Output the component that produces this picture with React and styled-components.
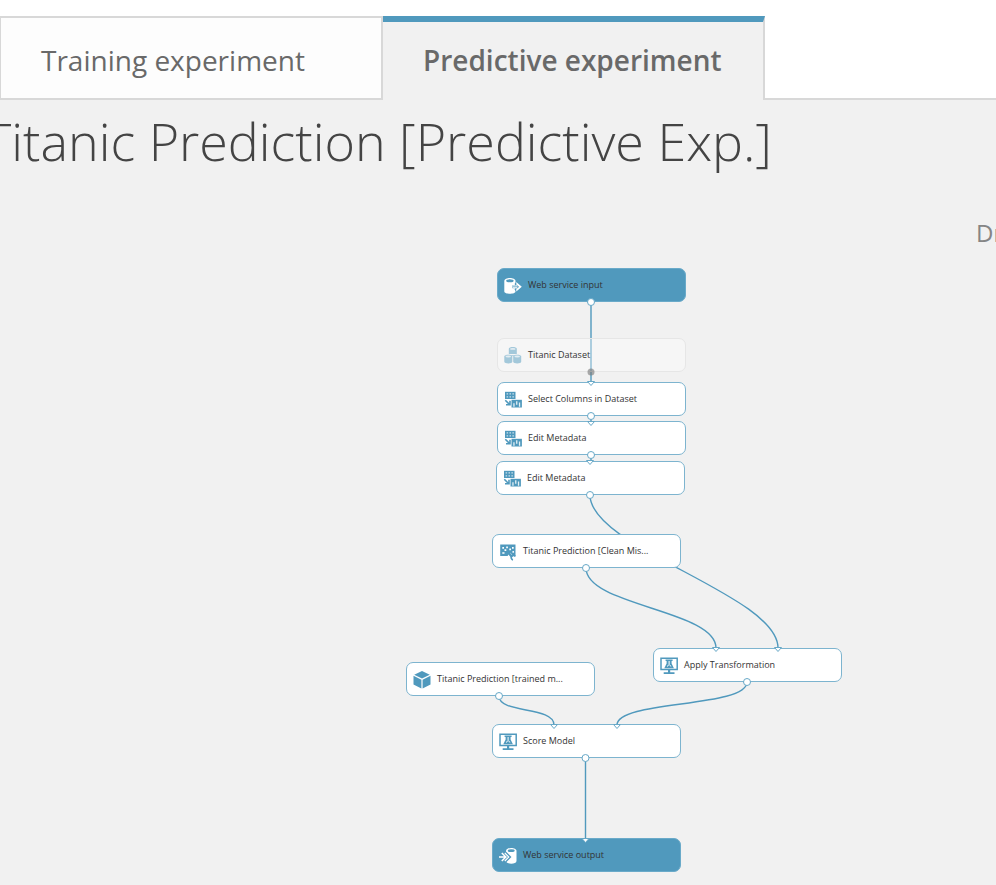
import React from "react";
import styled, { createGlobalStyle, css } from "styled-components";

const BLUE = "#5099bd";
const LINE = "#d8d8d8";
const CANVAS = "#f1f1f1";

const GlobalStyle = createGlobalStyle`
  *, *::before, *::after { box-sizing: border-box; }
  html, body, #root { min-height: 100vh; }
  body {
    margin: 0;
    background: ${CANVAS};
    font-family: "Open Sans", "Noto Sans", sans-serif;
    overflow: hidden;
  }
`;

const Page = styled.main`
  display: flex;
  flex-direction: column;
  min-height: 100vh;
`;

const TabBar = styled.div`
  display: flex;
  height: 100px;
  padding-top: 16px;
  background: #ffffff;
`;

const Tab = styled.button`
  flex: 0 0 382px;
  padding: 3px 40px 0;
  border: 2px solid ${LINE};
  background: #fdfdfd;
  color: #696969;
  font: 400 28px/36px "Open Sans", "Noto Sans", sans-serif;
  text-align: left;
  white-space: nowrap;
  cursor: pointer;

  &:first-child {
    flex-basis: 383px;
    border-left-width: 1px;
  }

  ${({ $active }) =>
    $active &&
    css`
      padding: 0 40px 3px;
      border-width: 6px 2px 0 0;
      border-top-color: ${BLUE};
      background: ${CANVAS};
      font-weight: 600;
    `}
`;

const TabFiller = styled.div`
  flex: 1;
  border-bottom: 2px solid ${LINE};
`;

const Title = styled.h1`
  margin: 0 0 0 -16px;
  height: 100px;
  color: #444444;
  font-size: 52px;
  font-weight: 300;
  line-height: 82px;
  white-space: nowrap;
`;

const Canvas = styled.section`
  position: relative;
  flex: 1;
  min-height: 685px;
  overflow: hidden;
`;

const DropHint = styled.p`
  position: absolute;
  left: 976px;
  top: 16px;
  margin: 0;
  color: #858585;
  font-size: 24px;
  line-height: 34px;
  white-space: nowrap;
`;

const Layer = styled.svg`
  position: absolute;
  inset: 0;
  width: 100%;
  height: 100%;
  pointer-events: none;
`;

const NodeBox = styled.div`
  position: absolute;
  left: ${({ $x }) => $x}px;
  top: ${({ $y }) => $y}px;
  display: flex;
  align-items: center;
  gap: 6px;
  width: 189px;
  height: 34px;
  padding: 0 6px;
  border: 1px solid #7db4cf;
  border-radius: 7px;
  background: #ffffff;
  color: #333333;

  ${({ $kind }) =>
    $kind === "service" &&
    css`
      border-color: #6aaac9;
      background: ${BLUE};
    `}

  ${({ $kind }) =>
    $kind === "muted" &&
    css`
      border-color: #e6e6e6;
      background: rgba(255, 255, 255, 0.35);
    `}
`;

const NodeLabel = styled.span`
  font-size: 9px;
  line-height: 14px;
  white-space: nowrap;
`;

const NodeIcon = styled.svg`
  flex: none;
  width: 18px;
  height: 18px;
  margin-top: 2px;
`;

function InputIcon() {
  return (
    <NodeIcon viewBox="0 0 18 18" aria-hidden="true">
      <path fill="#fff" d="M.3 4C.3 0 11.500 0 11.500 4V14.500C11.500 17.500 .3 17.500 .3 14.500Z" />
      <ellipse cx="5.900" cy="3.700" rx="3.700" ry="1.500" fill={BLUE} />
      <path fill="none" stroke={BLUE} strokeWidth="3" d="M8.500 9.800H15M11.500 6 15.500 9.800 11.500 13.600" />
      <path fill="#fff" d="M12.300 5 17.800 9.800 12.300 14.600V11.200H9V8.400H12.300Z" />
      <path fill="none" stroke={BLUE} strokeWidth=".8" d="M9 9.800H14.500M12.500 8 14.500 9.800 12.500 11.600" />
    </NodeIcon>
  );
}

function OutputIcon() {
  return (
    <NodeIcon viewBox="0 0 18 18" aria-hidden="true">
      <path fill="#fff" d="M7 4C7 0 17.500 0 17.500 4V14C17.500 17.500 7 17.500 7 14Z" />
      <ellipse cx="12.200" cy="3.700" rx="3.500" ry="1.400" fill={BLUE} />
      <path fill="none" stroke={BLUE} strokeWidth="3.500" d="M6 6 10 10 6 14" />
      <path fill="none" stroke="#fff" strokeWidth="1.500" d="M0 10H6.500M2.800 6 6.800 10 2.800 14" />
      <path fill="none" stroke="#fff" strokeWidth="1.100" d="M5.800 6 9.800 10 5.800 14" />
    </NodeIcon>
  );
}

function Drum({ x, y }) {
  return (
    <g transform={`translate(${x} ${y})`}>
      <path fill="#a3c8da" d="M0 1.800C0-.5 8-.5 8 1.800V7.200C8 9.500 0 9.500 0 7.200Z" />
      <ellipse cx="4" cy="1.900" rx="2.800" ry=".9" fill="#e3edf2" />
    </g>
  );
}

function DatasetIcon() {
  return (
    <NodeIcon viewBox="0 0 18 18" aria-hidden="true">
      <Drum x={4.8} y={0} />
      <path fill="#f5f5f5" d="M0 7H18V8.200H0Z" />
      <Drum x={0.3} y={7.6} />
      <Drum x={9.2} y={7.6} />
    </NodeIcon>
  );
}

function ColumnsIcon() {
  return (
    <NodeIcon viewBox="0 0 18 18" aria-hidden="true">
      <path fill={BLUE} d="M1 .8H11.500V8H1Z" />
      <path
        fill="#c9e0eb"
        d="M2.600 2.300h1.500v1.300H2.600zM5.500 2.300H7v1.300H5.500zM8.400 2.300H9.900v1.300H8.400zM2.600 5.200h1.500v1.300H2.600zM5.500 5.200H7v1.300H5.500zM8.400 5.200H9.900v1.300H8.400z"
      />
      <path fill="none" stroke={BLUE} strokeWidth="1.600" d="M1.300 9.200 5.500 13.500M6 9.800V13.800H2" />
      <path fill={BLUE} d="M7.500 8.800H17.900V16.500H7.500Z" />
      <path fill="#e4f0f5" d="M9.300 12.200h1.300V15.700H9.300zM12.100 10.300h1.300v3.400H12.100zM14.900 11.500h1.300v4.200H14.900z" />
    </NodeIcon>
  );
}

function CleanIcon() {
  return (
    <NodeIcon viewBox="0 0 18 18" aria-hidden="true">
      <path fill={BLUE} d="M1.200 1.500H16.500V13H1.200Z" />
      <path
        fill="#fff"
        d="M3.300 4H5V5.700H3.300zM7.200 3.600H8.900V5.300H7.200zM13 4H14.700V5.700H13zM3.300 9.300H5.500V10.800H3.300zM5.500 6.300H7.300V8H5.500zM10.300 5.500H12V7.200H10.300zM13.500 8H14.900V9.800H13.500z"
      />
      <path fill="none" stroke="#fff" strokeWidth="3.600" d="M10 11 13 14.500" />
      <path fill="none" stroke={BLUE} strokeWidth="2.400" d="M8 8 13 14" />
      <path fill="none" stroke={BLUE} strokeWidth="1.700" d="M16.300 13.500A2.200 2.200 0 1 0 14 16.800" />
    </NodeIcon>
  );
}

function ModelIcon() {
  return (
    <NodeIcon viewBox="0 0 18 18" aria-hidden="true">
      <path fill="#fff" stroke={BLUE} strokeWidth="1.500" d="M1 1.200H17.200V12.500H1Z" />
      <path fill={BLUE} d="M5.600 2.500H12.600V3.900H11.600V6.500L13.900 11.300H4.300L6.600 6.500V3.900H5.600Z" />
      <path fill="none" stroke="#fff" strokeWidth="1" d="M9.100 4V7M7 9.500 9.100 7.500 11.200 9.500" />
      <path fill={BLUE} d="M8 12.500H10.200V15.300H8ZM3.700 15.300H14.500V16.900H3.700Z" />
    </NodeIcon>
  );
}

function CubeIcon() {
  return (
    <NodeIcon viewBox="0 0 18 18" aria-hidden="true">
      <path
        fill={BLUE}
        d="M9 0 16.800 3.800 9 7.600 1.200 3.800ZM.5 4.800 8.400 8.800V17.500L.5 13.500ZM17.500 4.800 9.600 8.800V17.500L17.500 13.500Z"
      />
    </NodeIcon>
  );
}

const NODES = [
  { x: 497, y: 68, label: "Web service input", icon: InputIcon, kind: "service" },
  { x: 497, y: 138, label: "Titanic Dataset", icon: DatasetIcon, kind: "muted" },
  { x: 497, y: 182, label: "Select Columns in Dataset", icon: ColumnsIcon },
  { x: 497, y: 221, label: "Edit Metadata", icon: ColumnsIcon },
  { x: 496, y: 261, label: "Edit Metadata", icon: ColumnsIcon },
  { x: 492, y: 334, label: "Titanic Prediction [Clean Mis...", icon: CleanIcon },
  { x: 653, y: 448, label: "Apply Transformation", icon: ModelIcon },
  { x: 406, y: 462, label: "Titanic Prediction [trained m...", icon: CubeIcon },
  { x: 492, y: 524, label: "Score Model", icon: ModelIcon },
  { x: 492, y: 638, label: "Web service output", icon: OutputIcon, kind: "service" },
];

const WIRES = [
  "M591 102V182",
  "M591 216V222",
  "M591 256V261",
  "M590 295C590 348 778 395 778 448",
  "M586 368C586 406 716 410 716 448",
  "M747 482C747 508 617 500 617 525",
  "M499 496C499 514 554 506 554 525",
  "M585.500 558V638",
];

const OUT_PORTS = [
  [591, 102],
  [591, 216],
  [591, 255],
  [590, 295],
  [586, 368],
  [747, 482],
  [499, 496],
  [585.5, 558],
];

const IN_PORTS = [
  [591, 182],
  [591, 222],
  [590, 261],
  [716, 448],
  [778, 448],
  [554, 525],
  [617, 525],
  [585.5, 639],
];

export default function App() {
  return (
    <>
      <GlobalStyle />
      <Page>
        <TabBar role="tablist">
          <Tab type="button" role="tab" aria-selected="false">
            Training experiment
          </Tab>
          <Tab type="button" role="tab" aria-selected="true" $active>
            Predictive experiment
          </Tab>
          <TabFiller />
        </TabBar>
        <Title>Titanic Prediction [Predictive Exp.]</Title>
        <Canvas aria-label="Experiment canvas">
          <DropHint>Dr</DropHint>
          <Layer aria-hidden="true">
            {WIRES.map((d) => (
              <path key={d} d={d} fill="none" stroke={BLUE} strokeWidth="1.400" />
            ))}
          </Layer>
          {NODES.map(({ x, y, label, icon: Icon, kind }) => (
            <NodeBox key={`${x}-${y}`} $x={x} $y={y} $kind={kind}>
              <Icon />
              <NodeLabel>{label}</NodeLabel>
            </NodeBox>
          ))}
          <Layer aria-hidden="true">
            <circle cx="591" cy="172" r="3.500" fill="#777" fillOpacity=".6" />
            {OUT_PORTS.map(([x, y]) => (
              <circle key={`${x}-${y}`} cx={x} cy={y} r="3.500" fill="#fff" stroke="#67a8c7" />
            ))}
            {IN_PORTS.map(([x, y]) => (
              <path
                key={`${x}-${y}`}
                d={`M${x - 3.5} ${y - 0.5}H${x + 3.5}L${x} ${y + 3.5}Z`}
                fill="#fff"
                stroke="#67a8c7"
              />
            ))}
          </Layer>
        </Canvas>
      </Page>
    </>
  );
}
